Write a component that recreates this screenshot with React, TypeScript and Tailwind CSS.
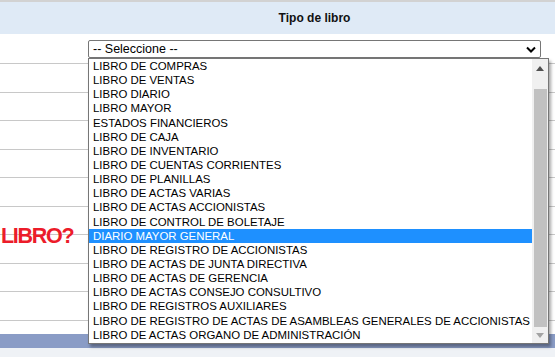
import React from "react";

const items = [
  "LIBRO DE COMPRAS",
  "LIBRO DE VENTAS",
  "LIBRO DIARIO",
  "LIBRO MAYOR",
  "ESTADOS FINANCIEROS",
  "LIBRO DE CAJA",
  "LIBRO DE INVENTARIO",
  "LIBRO DE CUENTAS CORRIENTES",
  "LIBRO DE PLANILLAS",
  "LIBRO DE ACTAS VARIAS",
  "LIBRO DE ACTAS ACCIONISTAS",
  "LIBRO DE CONTROL DE BOLETAJE",
  "DIARIO MAYOR GENERAL",
  "LIBRO DE REGISTRO DE ACCIONISTAS",
  "LIBRO DE ACTAS DE JUNTA DIRECTIVA",
  "LIBRO DE ACTAS DE GERENCIA",
  "LIBRO DE ACTAS CONSEJO CONSULTIVO",
  "LIBRO DE REGISTROS AUXILIARES",
  "LIBRO DE REGISTRO DE ACTAS DE ASAMBLEAS GENERALES DE ACCIONISTAS",
  "LIBRO DE ACTAS ORGANO DE ADMINISTRACIÓN",
];

const font = { fontFamily: '"Liberation Sans", Arial, sans-serif' };

export default function App() {
  const rows = Array.from({ length: 9 });
  return (
    <div className="relative w-[555px] h-[357px] overflow-hidden bg-white" style={font}>
      <div className="h-[2px] bg-[#d2d2d2]" />
      <div className="flex h-[32px] bg-[#dfeaf6]">
        <div className="w-[88px]" />
        <div className="w-[453px] flex items-center justify-center text-[12px] font-bold text-[#111]">
          Tipo de libro
        </div>
        <div className="flex-1" />
      </div>
      <div className="flex h-[30px] border-b border-[#c8c8c8] box-border">
        <div className="w-[88px]" />
        <div className="w-[453px] pt-[6px]">
          <div className="h-[18px] border border-[#767676] rounded-[2px] bg-white flex items-center justify-between pl-[4px] pr-[4px] text-[12.5px] text-black">
            <span>-- Seleccione --</span>
            <svg width="10" height="7" viewBox="0 0 10 7">
              <path d="M1 1.5 L5 5.5 L9 1.5" fill="none" stroke="#000" strokeWidth="2" />
            </svg>
          </div>
        </div>
        <div className="flex-1" />
      </div>
      {rows.map((_, i) => (
        <div key={i} className="flex h-[28.56px] border-b border-[#c8c8c8] box-border">
          <div className="w-[88px] overflow-visible">
            {i === 5 && (
              <div className="mt-[18.5px] ml-[1px] text-[21.5px] leading-[22px] font-bold text-[#ec1c2a] whitespace-nowrap tracking-[-1.3px]">
                LIBRO?
              </div>
            )}
          </div>
        </div>
      ))}
      <div className="h-[13px]" />
      <div className="h-[14px] bg-[#8a9cc6]" />
      <div className="h-[20px] bg-[#eff2f6]" />

      {/* dropdown list overlay */}
      <div className="absolute left-[88px] top-[58px] w-[461px] h-[286px] border border-[#767676] bg-white flex shadow-[2px_3px_3px_rgba(0,0,0,0.35)]">
        <div className="flex-1 text-[11.43px] text-black">
          {items.map((t, i) => (
            <div
              key={i}
              className={
                "h-[14.15px] leading-[14.15px] pl-[4px] whitespace-nowrap " +
                (i === 12 ? "bg-[#1e90ff] text-white" : "")
              }
            >
              {t}
            </div>
          ))}
        </div>
        <div className="w-[16px] bg-[#f0f0f0] flex flex-col items-center">
          <div className="h-[18px] flex items-center justify-center">
            <svg width="8" height="5" viewBox="0 0 8 5">
              <path d="M0 5 L4 0 L8 5 Z" fill="#505050" />
            </svg>
          </div>
          <div className="h-[12px]" />
          <div className="w-[13px] h-[238px] bg-[#c1c1c1]" />
          <div className="flex-1 flex items-center justify-center">
            <svg width="8" height="5" viewBox="0 0 8 5">
              <path d="M0 0 L8 0 L4 5 Z" fill="#a3a3a3" />
            </svg>
          </div>
        </div>
      </div>
    </div>
  );
}
